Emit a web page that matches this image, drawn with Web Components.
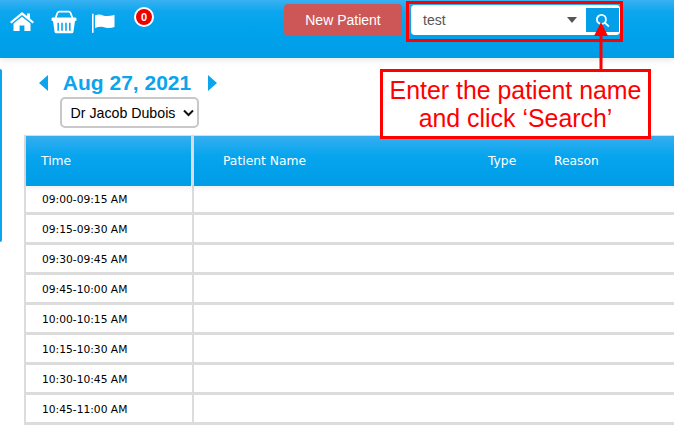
<!DOCTYPE html>
<html>
<head>
<meta charset="utf-8">
<title>Appointments</title>
<style>
  html, body { margin: 0; height: 425px; overflow: hidden; background: #fff; }
</style>
</head>
<body>
<app-page>
  <app-header></app-header>
  <day-view doctor="Dr Jacob Dubois" date="Aug 27, 2021"></day-view>
  <search-callout>Enter the patient name<br>and click ‘Search’</search-callout>
</app-page>

<script>
class AppPage extends HTMLElement {
  constructor() {
    super();
    this.attachShadow({ mode: 'open' });
    this.shadowRoot.innerHTML = `
      <style>
        :host { display: block; position: relative; width: 674px; height: 425px; overflow: hidden; }
      </style>
      <slot></slot>
    `;
  }
}

class AppHeader extends HTMLElement {
  constructor() {
    super();
    this.attachShadow({ mode: 'open' });
    this.shadowRoot.innerHTML = `
      <style>
        :host {
          display: flex;
          height: 58px;
          box-sizing: border-box;
          padding: 3px 51px 0 10px;
          background: linear-gradient(#38b1f1 0, #0ca6ee 12px, #00a3ec 30px, #009de7 100%);
          box-shadow: 0 2px 6px rgba(0,0,0,.1);
          align-items: flex-start;
          font-family: "Liberation Sans", Arial, sans-serif;
        }
        .icons { display: flex; align-items: flex-start; }
        svg { display: block; }
        .home { margin-top: 8px; }
        .basket { margin: 7px 0 0 17px; }
        .flag { margin: 10px 0 0 15px; }
        .badge {
          box-sizing: border-box;
          width: 20px; height: 20px;
          margin: 4px 0 0 19px;
          border: 2px solid #fff;
          border-radius: 50%;
          background: #ee0000;
          color: #fff;
          font-size: 11px;
          font-weight: bold;
          line-height: 16px;
          text-align: center;
        }
        .new {
          box-sizing: border-box;
          width: 118px; height: 32px;
          margin: 1px 0 0 130px;
          border-radius: 4px;
          background: #cd5757;
          color: #fff;
          font-size: 14px;
          line-height: 32px;
          text-align: center;
        }
        .search {
          display: flex;
          align-items: center;
          box-sizing: border-box;
          width: 209px; height: 30px;
          margin: 2px 0 0 9px;
          padding-left: 12px;
          background: #fff;
          border-radius: 4px;
          color: #555;
          font-size: 14px;
        }
        .search span { flex: 1; }
        .caret { width: 0; height: 0; margin-right: 9px; border: 5px solid transparent; border-top: 6px solid #555; border-bottom: 0; }
        .btn {
          display: flex;
          align-items: center;
          justify-content: center;
          width: 33px; height: 24px;
          margin-right: 1px;
          background: #039fe9;
        }
      </style>
      <div class="icons">
        <svg class="home" width="24" height="22" viewBox="0 0 24 22" fill="#fff">
          <path d="M12 1 L17 5 V2.5 H20 V7.6 L24 11 L22.6 12.6 L12 4 L1.4 12.6 L0 11 Z"/>
          <path d="M12 5.8 L20.5 12.6 V20 H14.4 V14.4 H9.6 V20 H3.5 V12.6 Z"/>
        </svg>
        <svg class="basket" width="26" height="24" viewBox="0 0 26 24">
          <path d="M4.5 8 L6.5 2.8 Q7 1.6 8.4 1.6 H17.6 Q19 1.6 19.5 2.8 L21.5 8" fill="none" stroke="#fff" stroke-width="1.8"/>
          <rect x="0.5" y="7.5" width="25" height="3.4" rx="1.2" fill="#fff"/>
          <path d="M2 11 H24 L22.4 22 Q22.2 23.2 21 23.2 H5 Q3.8 23.2 3.6 22 Z" fill="#fff"/>
          <path d="M7.2 12.8 V20.8 M11 12.8 V20.8 M15 12.8 V20.8 M18.8 12.8 V20.8" stroke="#0ea6ee" stroke-width="1.6"/>
        </svg>
        <svg class="flag" width="23" height="20" viewBox="0 0 23 20" fill="#fff">
          <rect x="0" y="0.5" width="1.6" height="19.5" rx=".8"/>
          <path d="M3 2.5 Q7 0.8 11 2.4 T22.5 2 V14 Q17.5 16 13 14.4 T3 15 Z"/>
        </svg>
        <div class="badge">0</div>
      </div>
      <div class="new">New Patient</div>
      <div class="search">
        <span>test</span>
        <div class="caret"></div>
        <div class="btn">
          <svg width="15" height="15" viewBox="0 0 14 14" fill="none" stroke="#fff">
            <circle cx="6" cy="6" r="4.2" stroke-width="1.7"/>
            <path d="M9.2 9.2 L13 12.6" stroke-width="1.7"/>
          </svg>
        </div>
      </div>
    `;
  }
}

class DayView extends HTMLElement {
  constructor() {
    super();
    this.attachShadow({ mode: 'open' });
    const times = ['09:00-09:15 AM', '09:15-09:30 AM', '09:30-09:45 AM', '09:45-10:00 AM',
      '10:00-10:15 AM', '10:15-10:30 AM', '10:30-10:45 AM', '10:45-11:00 AM'];
    const rows = times.map(t => `<div class="row"><div class="time">${t}</div><div></div></div>`).join('');
    this.shadowRoot.innerHTML = `
      <style>
        :host { display: flex; height: 367px; box-sizing: border-box; padding-top: 11px; }
        .rail { flex: none; width: 2px; height: 173px; background: #0aa5ee; border-radius: 0 2px 2px 0; }
        .main { flex: 1; padding-left: 22px; min-width: 0; }
        .nav { display: flex; flex-direction: column; align-items: center; width: 208px; }
        .date {
          display: flex; align-items: center;
          height: 28px;
          color: #0ca4ec;
          font: bold 21px "Liberation Sans", Arial, sans-serif;
        }
        .tri { width: 0; height: 0; border-top: 8px solid transparent; border-bottom: 8px solid transparent; }
        .tri.l { border-right: 9px solid #0ca4ec; margin-right: 15px; }
        .tri.r { border-left: 9px solid #0ca4ec; margin-left: 17px; }
        .select {
          display: flex; align-items: center; justify-content: space-between;
          box-sizing: border-box;
          width: 139px; height: 31px;
          margin: 0 0 0 2px;
          padding: 0 3px 0 9px;
          border: 2px solid #c8c8c8;
          border-radius: 5px;
          color: #000;
          font: 14.2px "Liberation Sans", Arial, sans-serif;
        }
        .table {
          margin-top: 7px;
          border-left: 2px solid #dcdcdc;
          font-family: "DejaVu Sans", sans-serif;
        }
        .head {
          position: relative;
          display: grid; grid-template-columns: 165px 1fr;
          column-gap: 3px;
          height: 50px;
          background: #dcdcdc;
          border-top: 1px solid #dcdcdc;
          box-sizing: border-box;
          box-shadow: 0 3px 6px rgba(0,0,0,.07);
          color: #fff;
          font-size: 12.3px;
          line-height: 50px;
        }
        .head > div { background: linear-gradient(#36aef0 0, #06a5ee 40%, #009ce7 100%); }
        .head .t { padding-left: 15px; }
        .cols { display: grid; grid-template-columns: 265px 66px 1fr; padding-left: 29px; }
        .row {
          display: grid; grid-template-columns: 166px 1fr;
          column-gap: 2px;
          height: 30px;
          box-sizing: border-box;
          background: #dcdcdc;
          padding-bottom: 3px;
        }
        .row > div { background: #fff; }
        .time { padding: 3px 0 0 16px; color: #000; font-size: 10.7px; line-height: 24px; box-sizing: border-box; }
      </style>
      <div class="rail"></div>
      <div class="main">
        <div class="nav">
          <div class="date"><span class="tri l"></span>${this.getAttribute('date')}<span class="tri r"></span></div>
          <div class="select">${this.getAttribute('doctor')}
            <svg width="11" height="8" viewBox="0 0 11 8" fill="none" stroke="#111" stroke-width="2"><path d="M1 1.5 L5.5 6 L10 1.5"/></svg>
          </div>
        </div>
        <div class="table">
          <div class="head">
            <div class="t">Time</div>
            <div class="cols"><span>Patient Name</span><span>Type</span><span>Reason</span></div>
          </div>
          ${rows}
        </div>
      </div>
    `;
  }
}

class SearchCallout extends HTMLElement {
  constructor() {
    super();
    this.attachShadow({ mode: 'open' });
    this.shadowRoot.innerHTML = `
      <style>
        :host { display: block; position: absolute; left: 0; top: 0; width: 0; height: 0; }
        .frame { position: absolute; left: 406px; top: 1px; width: 217px; height: 41px; box-sizing: border-box; border: 3px solid #f00; }
        .arrow { position: absolute; left: 592px; top: 22px; }
        .note {
          position: absolute; left: 380px; top: 69px;
          width: 271px; height: 70px;
          box-sizing: border-box;
          border: 3px solid #f00;
          background: #fff;
          color: #f00;
          font: 24.9px/28px "Liberation Sans", Arial, sans-serif;
          text-align: center;
          padding-top: 4px;
        }
      </style>
      <div class="frame"></div>
      <svg class="arrow" width="18" height="48" viewBox="0 0 18 48" fill="#f00">
        <path d="M9 0 L16 14 H10.5 V48 H7.5 V14 H2 Z"/>
      </svg>
      <div class="note"><slot></slot></div>
    `;
  }
}

customElements.define('app-page', AppPage);
customElements.define('app-header', AppHeader);
customElements.define('day-view', DayView);
customElements.define('search-callout', SearchCallout);
</script>
</body>
</html>
